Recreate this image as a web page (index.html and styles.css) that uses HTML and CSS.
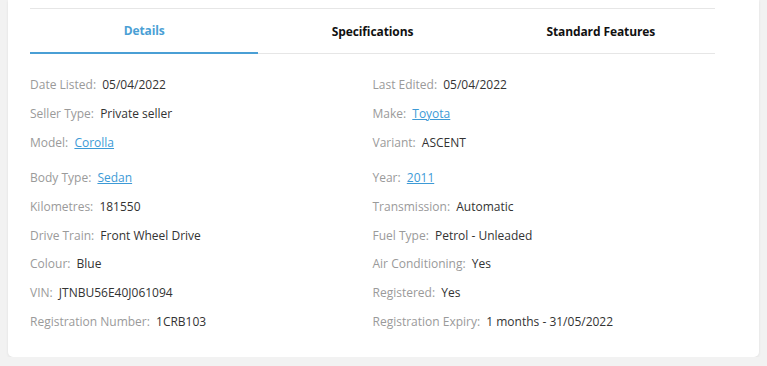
FILE: index.html
```html
<!DOCTYPE html>
<html lang="en">
<head>
  <meta charset="UTF-8"/>
  <meta name="viewport" content="width=device-width, initial-scale=1.0"/>
  <title>Vehicle Details</title>
  <link rel="stylesheet" href="styles.css">
</head>
<body>
  <div class="card">
    <div class="inner">
      <div class="tabs">
        <div class="tab active">Details</div>
        <div class="tab">Specifications</div>
        <div class="tab">Standard Features</div>
      </div>

      <div class="details">
        <div class="group">
          <div class="row"><span class="lbl">Date Listed:</span> <span class="val">05/04/2022</span></div>
          <div class="row"><span class="lbl">Last Edited:</span> <span class="val">05/04/2022</span></div>
          <div class="row"><span class="lbl">Seller Type:</span> <span class="val">Private seller</span></div>
          <div class="row"><span class="lbl">Make:</span> <a class="val" href="#">Toyota</a></div>
          <div class="row"><span class="lbl">Model:</span> <a class="val" href="#">Corolla</a></div>
          <div class="row"><span class="lbl">Variant:</span> <span class="val">ASCENT</span></div>
        </div>
        <div class="group">
          <div class="row"><span class="lbl">Body Type:</span> <a class="val" href="#">Sedan</a></div>
          <div class="row"><span class="lbl">Year:</span> <a class="val" href="#">2011</a></div>
          <div class="row"><span class="lbl">Kilometres:</span> <span class="val">181550</span></div>
          <div class="row"><span class="lbl">Transmission:</span> <span class="val">Automatic</span></div>
          <div class="row"><span class="lbl">Drive Train:</span> <span class="val">Front Wheel Drive</span></div>
          <div class="row"><span class="lbl">Fuel Type:</span> <span class="val">Petrol - Unleaded</span></div>
          <div class="row"><span class="lbl">Colour:</span> <span class="val">Blue</span></div>
          <div class="row"><span class="lbl">Air Conditioning:</span> <span class="val">Yes</span></div>
          <div class="row"><span class="lbl">VIN:</span> <span class="val">JTNBU56E40J061094</span></div>
          <div class="row"><span class="lbl">Registered:</span> <span class="val">Yes</span></div>
          <div class="row"><span class="lbl">Registration Number:</span> <span class="val">1CRB103</span></div>
          <div class="row"><span class="lbl">Registration Expiry:</span> <span class="val">1 months - 31/05/2022</span></div>
        </div>
      </div>
    </div>
  </div>
</body>
</html>
```

FILE: styles.css
```css
body { margin: 0; background: #f2f2f2; font-family: "Open Sans", "Noto Sans", Arial, sans-serif; font-size: 12px; color: #333; }
.card { margin: 0 8px; background: #fff; border-radius: 0 0 5px 5px; box-shadow: 0 1px 3px rgba(0,0,0,0.08); padding: 8px 44px 20px 22px; height: 329px; }
.inner { border-top: 1px solid #e6e6e6; }
.tabs { display: grid; grid-template-columns: repeat(3, 1fr); border-bottom: 1px solid #e6e6e6; }
.tab { height: 44px; display: flex; align-items: center; justify-content: center; font-weight: bold; color: #111; letter-spacing: -0.1px; }
.tab.active { color: #4a9fd5; border-bottom: 2px solid #4a9fd5; margin-bottom: -1px; height: 43px; }
.details { padding-top: 16px; }
.group { display: grid; grid-template-columns: 1fr 1fr; }
.group + .group { margin-top: 7px; }
.group + .group .row { line-height: 28.8px; }
.row { line-height: 29px; white-space: nowrap; }
.lbl { color: #9a9a9a; margin-right: 3px; }
.val { color: #333; }
a.val { color: #3d9ad6; text-decoration: underline; }
```
